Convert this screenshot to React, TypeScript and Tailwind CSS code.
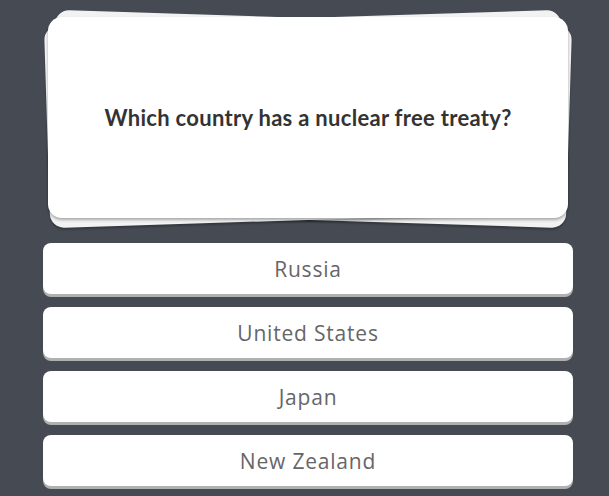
const answers = ["Russia", "United States", "Japan", "New Zealand"];

export default function App() {
  return (
    <div
      className="w-[609px] h-[496px] overflow-hidden bg-[#454a53] pl-[43px] pr-[36px]"
      style={{ fontFamily: "Lato, 'Open Sans', sans-serif" }}
    >
      <div className="relative h-[243px] pt-[17px]">
        {/* stacked cards behind */}
        <div className="absolute left-[9px] right-[4px] top-[18px] h-[202px] rounded-[14px] bg-[#f2f2f2] shadow-[0_2px_2px_rgba(0,0,0,0.25)] rotate-[1.8deg]" />
        <div className="absolute left-[4px] right-[9px] top-[18px] h-[202px] rounded-[14px] bg-[#f2f2f2] shadow-[0_2px_2px_rgba(0,0,0,0.25)] -rotate-[1.8deg]" />
        <div className="relative mx-[5px] h-[201px] rounded-[14px] bg-white shadow-[0_2px_3px_rgba(0,0,0,0.3)] flex items-center justify-center">
          <p className="text-[22px] font-bold tracking-[0.3px] text-[#333333]">
            Which country has a nuclear free treaty?
          </p>
        </div>
      </div>
      <div className="flex flex-col gap-[13px]">
        {answers.map((a) => (
          <button
            key={a}
            className="h-[51px] w-full rounded-[8px] bg-white shadow-[0_3px_0_#b0b0b0] pt-[3px] text-[21px] tracking-[0.8px] text-[#666666] flex items-center justify-center font-['Open_Sans',sans-serif]"
          >
            {a}
          </button>
        ))}
      </div>
    </div>
  );
}
